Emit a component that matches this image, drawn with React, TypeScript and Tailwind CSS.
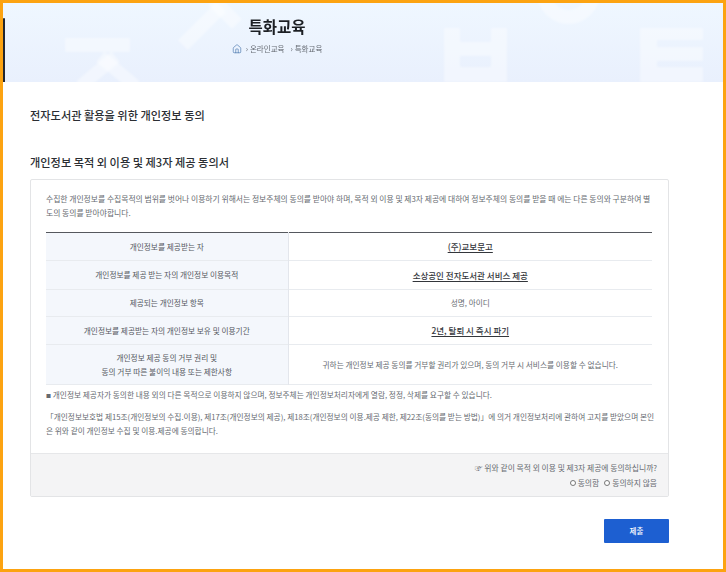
import React, { useState } from 'react';
import { Home } from 'lucide-react';

const font = { fontFamily: '"Noto Sans CJK KR", "Noto Sans", sans-serif' };

const rows = [
  { h: 'h-[28px]', label: ['개인정보를 제공받는 자'], value: '(주)교보문고', strong: true },
  { h: 'h-[29px]', label: ['개인정보를 제공 받는 자의 개인정보 이용목적'], value: '소상공인 전자도서관 서비스 제공', strong: true },
  { h: 'h-[27px]', label: ['제공되는 개인정보 항목'], value: '성명, 아이디', strong: false },
  { h: 'h-[28px]', label: ['개인정보를 제공받는 자의 개인정보 보유 및 이용기간'], value: '2년, 탈퇴 시 즉시 파기', strong: true },
  {
    h: 'h-[40px]',
    label: ['개인정보 제공 동의 거부 권리 및', '동의 거부 따른 불이익 내용 또는 제한사항'],
    value: '귀하는 개인정보 제공 동의를 거부할 권리가 있으며, 동의 거부 시 서비스를 이용할 수 없습니다.',
    strong: false,
  },
];

// faded shapes behind the banner title
const BannerShapes = () => (
  <div aria-hidden className="absolute inset-0 blur-[1px]">
    {/* left */}
    <div className="absolute left-[62px] top-[35px] w-[65px] h-[14px] bg-white/40" />
    <div className="absolute left-[72px] top-[62px] w-[46px] h-[13px] bg-white/40 -rotate-[40deg]" />
    <div className="absolute left-[92px] top-[62px] w-[46px] h-[13px] bg-white/40 rotate-[40deg]" />
    {/* middle */}
    <div className="absolute left-[172px] top-[16px] w-[54px] h-[14px] bg-white/40 -rotate-[45deg]" />
    <div className="absolute left-[205px] top-[2px] w-[34px] h-[14px] bg-white/40 rotate-[45deg]" />
    {/* ring */}
    <div className="absolute left-[534px] top-[-42px] w-[63px] h-[63px] rounded-full border-[14px] border-white/40" />
    {/* two posts with rungs */}
    <div className="absolute left-[441px] top-[25px] w-[16px] h-[54px] bg-white/40" />
    <div className="absolute left-[488px] top-[25px] w-[16px] h-[54px] bg-white/40" />
    <div className="absolute left-[457px] top-[39px] w-[31px] h-[14px] bg-white/40" />
    <div className="absolute left-[457px] top-[64px] w-[31px] h-[15px] bg-white/40" />
    {/* post with three bars */}
    <div className="absolute left-[637px] top-[25px] w-[17px] h-[54px] bg-white/40" />
    <div className="absolute left-[654px] top-[25px] w-[46px] h-[12px] bg-white/40" />
    <div className="absolute left-[654px] top-[44px] w-[46px] h-[14px] bg-white/40" />
    <div className="absolute left-[654px] top-[64px] w-[46px] h-[15px] bg-white/40" />
  </div>
);

const App: React.FC = () => {
  const [agree, setAgree] = useState<'yes' | 'no' | null>(null);

  return (
    <div style={font} className="w-[726px] h-[572px] box-border border-[3px] border-[#fca311] bg-white overflow-hidden">
      {/* banner */}
      <div className="relative h-[79px] overflow-hidden bg-gradient-to-b from-[#eff7ff] to-[#e9f0fd]">
        <BannerShapes />
        <div aria-hidden className="absolute left-0 top-[15px] h-[64px] w-[2px] rounded-t-sm bg-[#23272f]" />
        <div className="relative w-[548px] flex flex-col items-center pt-[13px]">
          <h1 className="text-[15.5px] leading-[20px] font-bold text-[#1c1f24]">특화교육</h1>
          <div className="mt-[7px] flex items-center text-[7.5px] leading-[12px] text-[#666b73]">
            <Home size={10} strokeWidth={1.5} className="text-[#3f6fa8] mr-[4px]" />
            <span className="mr-[2px]">›</span>
            <span>온라인교육</span>
            <span className="ml-[6px] mr-[2px]">›</span>
            <span>특화교육</span>
          </div>
        </div>
      </div>

      <div className="px-[27px]">
        <h2 className="mt-[25px] text-[11.2px] leading-[16px] font-medium text-[#2b2e33]">전자도서관 활용을 위한 개인정보 동의</h2>
        <h3 className="mt-[31px] text-[11.2px] leading-[16px] font-medium text-[#2b2e33]">개인정보 목적 외 이용 및 제3자 제공 동의서</h3>

        {/* consent card */}
        <div className="mt-[9px] w-[639px] h-[318px] box-border border border-[#e3e4e6] rounded-[2px] flex flex-col">
          <div className="flex-1 pl-[15px] pt-[12px] text-[#666a70] text-[7.7px]">
            <p className="text-[7.8px] leading-[14px] w-[606px]">
              수집한 개인정보를 수집목적의 범위를 벗어나 이용하기 위해서는 정보주체의 동의를 받아야 하며, 목적 외 이용 및 제3자 제공에 대하여 정보주체의 동의를 받을 때 에는 다른 동의와 구분하여 별도의 동의를 받아야합니다.
            </p>

            <table className="mt-[12px] w-[606px] table-fixed border-collapse border-t border-t-[#55585e] text-center">
              <tbody>
                {rows.map((r) => (
                  <tr key={r.value} className={`${r.h} border-b border-b-[#e8ebef]`}>
                    <th className="w-[242px] bg-[#f4f7fc] border-r border-r-[#e3e6ec] font-normal text-[#55585e] leading-[14px] p-0">
                      {r.label.map((l) => (
                        <div key={l}>{l}</div>
                      ))}
                    </th>
                    <td className="p-0">
                      {r.strong ? (
                        <span className="text-[8.5px] font-medium text-[#33363b] underline underline-offset-2">{r.value}</span>
                      ) : (
                        <span>{r.value}</span>
                      )}
                    </td>
                  </tr>
                ))}
              </tbody>
            </table>

            <p className="mt-[3px] leading-[14px]">
              <span className="text-[5px] align-[1px]">■</span> 개인정보 제공자가 동의한 내용 외의 다른 목적으로 이용하지 않으며, 정보주체는 개인정보처리자에게 열람, 정정, 삭제를 요구할 수 있습니다.
            </p>
            <p className="mt-[8px] leading-[14px] w-[612px]">
              「개인정보보호법 제15조(개인정보의 수집.이용), 제17조(개인정보의 제공), 제18조(개인정보의 이용.제공 제한, 제22조(동의를 받는 방법)」에 의거 개인정보처리에 관하여 고지를 받았으며 본인은 위와 같이 개인정보 수집 및 이용.제공에 동의합니다.
            </p>
          </div>

          <div className="h-[43px] bg-[#f4f4f5] border-t border-t-[#e6e7e9] flex flex-col items-end justify-center pr-[11px] text-[7.8px] leading-[15px] text-[#666a70]">
            <div>☞ 위와 같이 목적 외 이용 및 제3자 제공에 동의하십니까?</div>
            <div className="flex items-center">
              <label className="flex items-center mr-[5px]" onClick={() => setAgree('yes')}>
                <span className={`w-[6px] h-[6px] rounded-full border border-[#777] mr-[2px] ${agree === 'yes' ? 'bg-[#777]' : 'bg-white'}`} />
                동의함
              </label>
              <label className="flex items-center" onClick={() => setAgree('no')}>
                <span className={`w-[6px] h-[6px] rounded-full border border-[#777] mr-[2px] ${agree === 'no' ? 'bg-[#777]' : 'bg-white'}`} />
                동의하지 않음
              </label>
            </div>
          </div>
        </div>

        <div className="w-[639px] flex justify-end mt-[22px]">
          <button className="w-[65px] h-[24px] bg-[#1d5fd1] rounded-[1px] text-white text-[7.5px] font-medium">제출</button>
        </div>
      </div>
    </div>
  );
};

export default App;
